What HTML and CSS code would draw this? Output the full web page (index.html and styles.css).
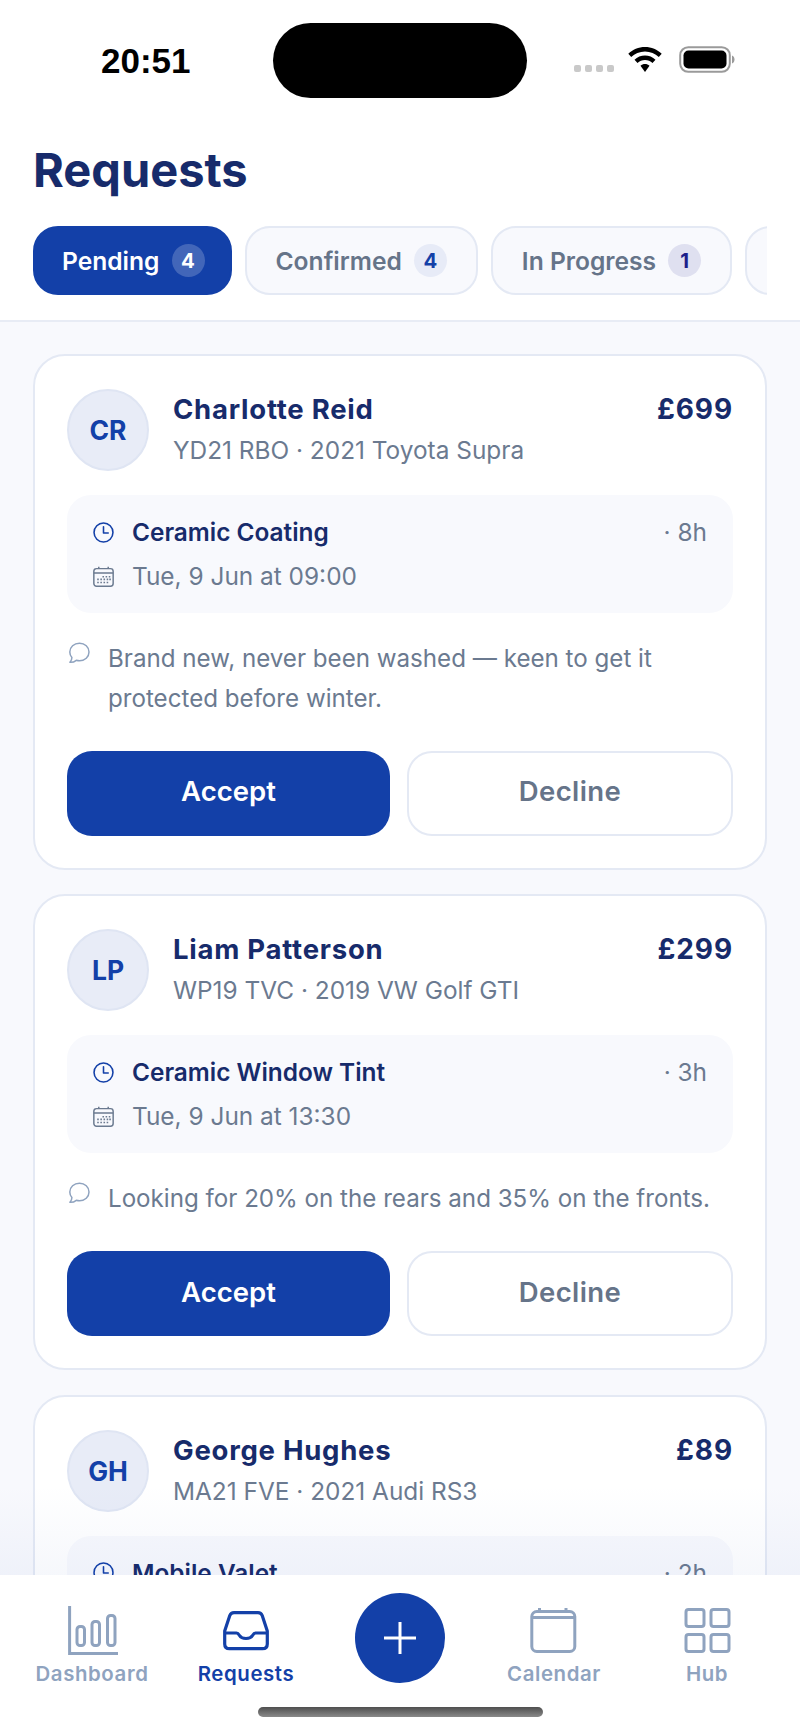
FILE: index.html
```html
<!DOCTYPE html>
<html lang="en">
<head>
<meta charset="utf-8">
<title>Requests</title>
<link rel="stylesheet" href="styles.css">
</head>
<body>
<div class="app">
  <div class="status">
    <span class="time">20:51</span>
    <div class="island"></div>
    <div class="status-icons">
      <div class="dots"><i></i><i></i><i></i><i></i></div>
      <svg class="wifi" viewBox="0 0 34 25"><path d="M17 0C10.500 0 4.700 2.500 0.300 6.700L3.200 10C6.800 6.600 11.600 4.500 17 4.500S27.200 6.600 30.800 10L33.700 6.700C29.300 2.500 23.500 0 17 0Z"/><path d="M17 8.500C13 8.500 9.300 10.100 6.500 12.700L9.500 16C11.500 14.100 14.100 13 17 13S22.500 14.100 24.500 16L27.500 12.700C24.700 10.100 21 8.500 17 8.500Z"/><path d="M17 17C15.300 17 13.700 17.600 12.500 18.700L17 25L21.500 18.700C20.300 17.600 18.700 17 17 17Z"/></svg>
      <svg class="battery" viewBox="0 0 56 27"><rect x="1.200" y="1.200" width="49.600" height="24.600" rx="8" fill="none" stroke="#9a9a9a" stroke-width="2"/><rect x="4.500" y="4.500" width="43" height="18" rx="5"/><path d="M53 9.500C55 10.500 55.500 12 55.500 13.500S55 16.500 53 17.500Z" fill="#9a9a9a"/></svg>
    </div>
  </div>
  <header class="header">
    <h1 class="title">Requests</h1>
    <div class="tabs">
      <div class="tab tab-active">Pending <span class="badge badge-active">4</span></div>
      <div class="tab">Confirmed <span class="badge badge-blue">4</span></div>
      <div class="tab">In Progress <span class="badge badge-indigo">1</span></div>
      <div class="tab">Completed <span class="badge badge-blue">2</span></div>
    </div>
  </header>
  <main class="list-wrap">
    <div class="list">
      <article class="card">
        <div class="person">
          <div class="avatar">CR</div>
          <div class="who">
            <div class="name-row"><span class="name">Charlotte Reid</span><span class="price">£699</span></div>
            <div class="car">YD21 RBO · 2021 Toyota Supra</div>
          </div>
        </div>
        <div class="info">
          <div class="info-row">
            <svg class="ico" viewBox="0 0 20 20"><use href="#clock"/></svg>
            <span class="service">Ceramic Coating</span><span class="dur">· 8h</span>
          </div>
          <div class="info-row">
            <svg class="ico" viewBox="0 0 20 20"><use href="#cal"/></svg>
            <span class="date">Tue, 9 Jun at 09:00</span>
          </div>
        </div>
        <div class="note">
          <svg class="note-ico" viewBox="0 0 22 22"><use href="#bubble"/></svg>
          <p class="note-text">Brand new, never been washed — keen to get it protected before winter.</p>
        </div>
        <div class="actions"><div class="btn btn-accept">Accept</div><div class="btn btn-decline">Decline</div></div>
      </article>
      <article class="card">
        <div class="person">
          <div class="avatar">LP</div>
          <div class="who">
            <div class="name-row"><span class="name">Liam Patterson</span><span class="price">£299</span></div>
            <div class="car">WP19 TVC · 2019 VW Golf GTI</div>
          </div>
        </div>
        <div class="info">
          <div class="info-row">
            <svg class="ico" viewBox="0 0 20 20"><use href="#clock"/></svg>
            <span class="service">Ceramic Window Tint</span><span class="dur">· 3h</span>
          </div>
          <div class="info-row">
            <svg class="ico" viewBox="0 0 20 20"><use href="#cal"/></svg>
            <span class="date">Tue, 9 Jun at 13:30</span>
          </div>
        </div>
        <div class="note">
          <svg class="note-ico" viewBox="0 0 22 22"><use href="#bubble"/></svg>
          <p class="note-text">Looking for 20% on the rears and 35% on the fronts.</p>
        </div>
        <div class="actions"><div class="btn btn-accept">Accept</div><div class="btn btn-decline">Decline</div></div>
      </article>
      <article class="card">
        <div class="person">
          <div class="avatar">GH</div>
          <div class="who">
            <div class="name-row"><span class="name">George Hughes</span><span class="price">£89</span></div>
            <div class="car">MA21 FVE · 2021 Audi RS3</div>
          </div>
        </div>
        <div class="info">
          <div class="info-row">
            <svg class="ico" viewBox="0 0 20 20"><use href="#clock"/></svg>
            <span class="service">Mobile Valet</span><span class="dur">· 2h</span>
          </div>
        </div>
      </article>
    </div>
    <div class="fade"></div>
  </main>
  <nav class="nav">
    <div class="nav-item">
      <svg class="nav-ico" viewBox="0 0 52 52"><path d="M3.600 0V47.500H52" fill="none" stroke="currentColor" stroke-width="3"/><rect x="11" y="20.500" width="7.500" height="19" rx="3" fill="none" stroke="currentColor" stroke-width="3"/><rect x="26" y="15.500" width="7.500" height="24" rx="3" fill="none" stroke="currentColor" stroke-width="3"/><rect x="41.500" y="9.500" width="7.500" height="30" rx="3" fill="none" stroke="currentColor" stroke-width="3"/></svg>
      <span>Dashboard</span>
    </div>
    <div class="nav-item nav-current">
      <svg class="nav-ico" viewBox="0 0 52 52"><path d="M14 6.700H38C40 6.700 41.500 7.700 42.200 9.500L47.300 25V38C47.300 41 45.500 42.700 42.500 42.700H9.500C6.500 42.700 4.700 41 4.700 38V25L9.800 9.500C10.500 7.700 12 6.700 14 6.700Z" fill="none" stroke="currentColor" stroke-width="3.200" stroke-linejoin="round"/><path d="M4.700 27H16.500C18 27 18.600 28 19.500 29.500C20.700 31.500 23 32.500 26 32.500S31.300 31.500 32.500 29.500C33.400 28 34 27 35.500 27H47.300" fill="none" stroke="currentColor" stroke-width="3.200"/></svg>
      <span>Requests</span>
    </div>
    <div class="nav-item">
      <div class="plus"><svg class="plus-ico" viewBox="0 0 34 34"><path d="M17 1V33M1 17H33" stroke="#fff" stroke-width="3" fill="none"/></svg></div>
    </div>
    <div class="nav-item">
      <svg class="nav-ico" viewBox="0 0 52 52"><rect x="3.800" y="5.500" width="43" height="40" rx="5" fill="none" stroke="currentColor" stroke-width="3"/><path d="M3.800 11.500H46.800M11.500 2V5.500M38 2V5.500" fill="none" stroke="currentColor" stroke-width="3"/></svg>
      <span>Calendar</span>
    </div>
    <div class="nav-item">
      <svg class="nav-ico" viewBox="0 0 52 52"><rect x="4" y="3.500" width="18" height="17" rx="2.500" fill="none" stroke="currentColor" stroke-width="3"/><rect x="29" y="3.500" width="18" height="17" rx="2.500" fill="none" stroke="currentColor" stroke-width="3"/><rect x="4" y="28.500" width="18" height="17" rx="2.500" fill="none" stroke="currentColor" stroke-width="3"/><rect x="29" y="28.500" width="18" height="17" rx="2.500" fill="none" stroke="currentColor" stroke-width="3"/></svg>
      <span class="hub-label">Hub</span>
    </div>
    <div class="home"></div>
  </nav>
</div>
<svg class="defs" aria-hidden="true">
  <defs>
    <g id="clock" fill="none" stroke="#1340a8" stroke-width="1.500"><circle cx="10" cy="10" r="9"/><path d="M10 4.500V10.500H14.500" stroke-linecap="round" stroke-linejoin="round"/></g>
    <g id="cal"><rect x="0.800" y="2.500" width="18.400" height="16.700" rx="2.500" fill="none" stroke="#6b7a90" stroke-width="1.400"/><path d="M0.800 6.700H19.200M5.500 0.800V2.500M14.500 0.800V2.500" fill="none" stroke="#6b7a90" stroke-width="1.400"/><path d="M9 9.500h1.500v1.500H9zM12 9.500h1.500v1.500H12zM15 9.500h1.500v1.500H15zM4 12h1.500v1.500H4zM7 12h1.500v1.500H7zM10 12h1.500v1.500H10zM13 12h1.500v1.500H13zM15.500 12h1.500v1.500H15.500zM4 15h1.500v1.500H4zM7 15h1.500v1.500H7zM10 15h1.500v1.500H10zM13 15h1.500v1.500H13z" fill="#6b7a90"/></g>
    <path id="bubble" d="M11.500 1.200C6 1.200 1.800 5 1.800 10C1.800 12.200 2.600 14.100 3.900 15.600C3.900 17.200 3.300 18.900 1.900 20.300C4.600 20.500 6.800 19.500 8.300 18.300C9.300 18.600 10.400 18.800 11.500 18.800C16.900 18.800 21 14.900 21 10S16.900 1.200 11.500 1.200Z" fill="none" stroke="#8fa3bf" stroke-width="1.500" stroke-linejoin="round"/>
  </defs>
</svg>
</body>
</html>
```
FILE: styles.css
```css
* { box-sizing: border-box; }
html, body { margin: 0; padding: 0; }
body { width: 800px; height: 1734px; overflow: hidden; background: #fff; font-family: Inter, "Liberation Sans", sans-serif; font-optical-sizing: none; }
.defs { display: none; }
.app { width: 800px; height: 1734px; display: flex; flex-direction: column; overflow: hidden; }

.status { height: 143px; padding: 23px 61px 0 101px; display: flex; align-items: flex-start; flex: none; }
.time { width: 172px; margin-top: 17px; font: 700 35px/42px "Liberation Sans", sans-serif; color: #000; }
.island { width: 254px; height: 75px; border-radius: 38px; background: #000; }
.status-icons { flex: 1; display: flex; align-items: flex-start; padding-left: 47px; padding-top: 24px; }
.dots { display: flex; gap: 4px; margin-top: 18px; margin-right: 14px; }
.dots i { display: block; width: 7px; height: 7px; border-radius: 2px; background: #c9c9c9; }
.wifi { width: 34px; height: 25px; margin-right: 17px; }
.battery { width: 56px; height: 27px; margin-top: -1px; }

.header { flex: none; height: 179px; padding: 0 33px; border-bottom: 2px solid #e8ecf5; }
.title { margin: 0; font-size: 47px; line-height: 54px; font-weight: 700; color: #172b6b; }
.tabs { margin-top: 29px; display: flex; gap: 13px; overflow: hidden; }
.tab { flex: none; height: 69px; padding: 0 29px; border: 2px solid #e4e9f4; border-radius: 25px; background: #f8f9fd; display: flex; align-items: center; gap: 12px; font-size: 24.600px; font-weight: 600; color: #667489; }
.tab-active { padding: 0 25px 0 27px; background: #1340a8; border-color: #1340a8; color: #fff; }
.badge { width: 33px; height: 33px; border-radius: 50%; display: flex; align-items: center; justify-content: center; font-size: 20.400px; font-weight: 700; }
.badge-active { background: rgba(255,255,255,.2); color: #fff; }
.badge-blue { background: #e7ebf7; color: #1340a8; }
.badge-indigo { background: #dfe0f0; color: #1c1f8a; }

.list-wrap { flex: 1; min-height: 0; position: relative; overflow: hidden; background: #f8f9fd; }
.list { padding: 32px 33px 0; display: flex; flex-direction: column; gap: 24.500px; }
.card { background: #fff; border: 2px solid #e4e9f4; border-radius: 32px; padding: 33px 32px 32px; }
.person { display: flex; gap: 24px; }
.avatar { flex: none; width: 82px; height: 82px; border-radius: 50%; border: 2px solid #dfe5f3; background: #e8ecf7; display: flex; align-items: center; justify-content: center; font-size: 26.500px; font-weight: 700; color: #1340a8; }
.who { flex: 1; min-width: 0; }
.name-row { display: flex; justify-content: space-between; align-items: center; height: 40px; }
.name { font-size: 27.500px; font-weight: 700; letter-spacing: 0.75px; color: #172b6b; }
.price { font-size: 28px; font-weight: 700; letter-spacing: 0.9px; color: #172b6b; }
.car { margin-top: 4px; font-size: 24.400px; line-height: 34px; color: #6b7a90; }
.info { margin-top: 24px; height: 118px; padding: 20px 26px 0; border-radius: 24px; background: #f8f9fd; display: flex; flex-direction: column; gap: 10px; }
.info-row { display: flex; align-items: center; height: 34px; }
.ico { flex: none; width: 21px; height: 21px; margin-right: 18px; }
.service { flex: 1; font-size: 24.400px; font-weight: 600; color: #172b6b; }
.dur { font-size: 24.400px; color: #6b7a90; }
.date { font-size: 24.400px; color: #6b7a90; }
.note { margin-top: 26px; display: flex; align-items: flex-start; }
.note-ico { flex: none; width: 22px; height: 22px; margin: 3px 18px 0 1px; }
.note-text { margin: 0; font-size: 24.150px; line-height: 39.500px; color: #6b7a90; }
.actions { margin-top: 32.500px; display: flex; gap: 17px; }
.btn { height: 85px; padding-bottom: 4px; border-radius: 25px; display: flex; align-items: center; justify-content: center; font-size: 27.500px; font-weight: 600; }
.btn-accept { width: 323px; background: #1340a8; color: #fff; }
.btn-decline { flex: 1; background: #fff; border: 2px solid #e4e9f4; color: #667489; letter-spacing: 0.4px; }

.fade { position: absolute; left: 0; right: 0; bottom: 0; height: 90px; background: linear-gradient(to bottom, rgba(19,64,168,0), rgba(19,64,168,.04)); }

.nav { flex: none; position: relative; height: 159px; background: #fff; display: flex; padding: 31px 15px 0; }
.nav-item { width: 154px; display: flex; flex-direction: column; align-items: center; color: #8fa3bf; font-size: 20.400px; font-weight: 600; letter-spacing: 0.6px; gap: 3px; }
.nav-current { color: #1340a8; }
.nav-ico { width: 52px; height: 52px; }
.hub-label { margin-right: 2px; }
.plus { width: 90px; height: 90px; margin-top: -13px; border-radius: 50%; background: #1340a8; display: flex; align-items: center; justify-content: center; }
.plus-ico { width: 34px; height: 34px; }
.home { position: absolute; left: 258px; bottom: 17px; width: 285px; height: 10px; border-radius: 5px; background: linear-gradient(to bottom, #4f4f4f, #8a8a8a); }
```
